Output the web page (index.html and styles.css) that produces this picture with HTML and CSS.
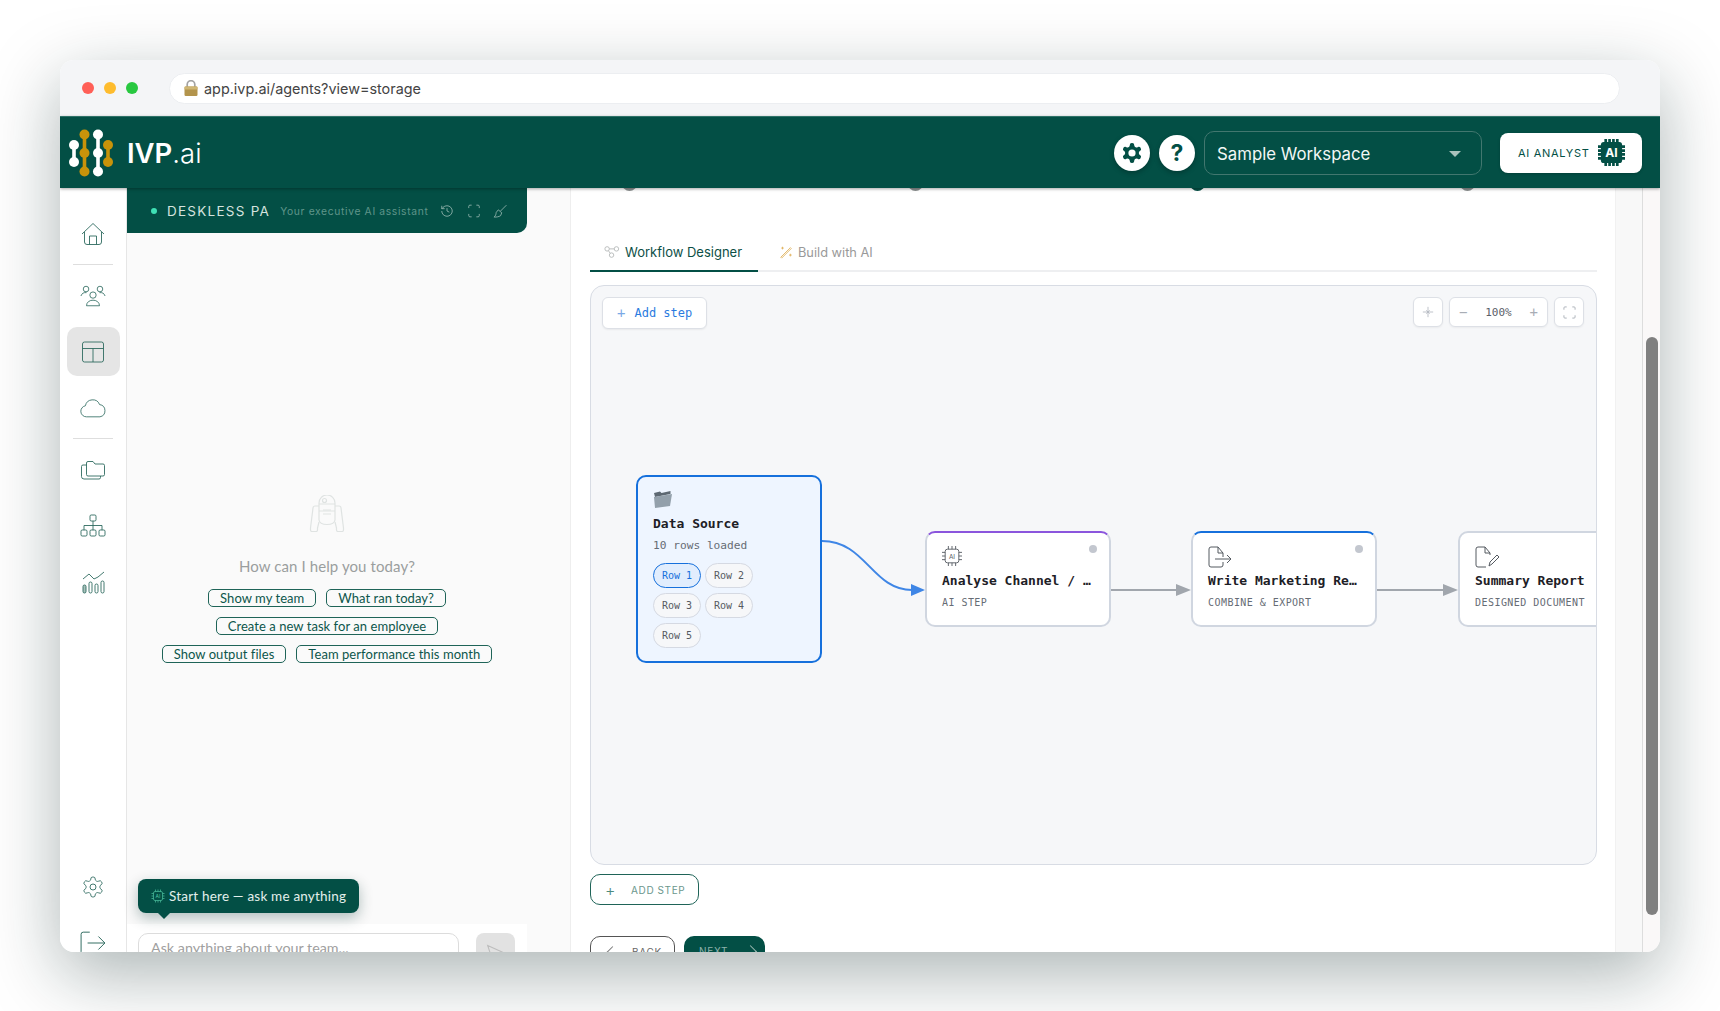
FILE: index.html
```html
<!DOCTYPE html>
<html lang="en">
<head>
    <meta charset="UTF-8">
    <title>IVP.ai Workflow Designer</title>
    <link rel="stylesheet" href="styles.css">
</head>
<body>
<div class="window">
    <!-- browser chrome -->
    <div class="titlebar">
        <div class="dots">
            <span class="dot red"></span>
            <span class="dot yellow"></span>
            <span class="dot green"></span>
        </div>
        <div class="urlbar">
            <svg class="lock" viewBox="0 0 14 16">
                <path d="M3.2 7V4.5a3.8 3.8 0 0 1 7.6 0V7" fill="none" stroke="#a3a3a3" stroke-width="1.7"/>
                <rect x="0.5" y="6.5" width="13" height="9.5" rx="1.2" fill="#b3944c"/>
                <rect x="0.5" y="6.5" width="13" height="3" rx="1" fill="#cfb673"/>
            </svg>
            <span>app.ivp.ai/agents?view=storage</span>
        </div>
    </div>

    <!-- app header -->
    <header class="appbar">
        <div class="brand">
            <svg class="logo" viewBox="0 0 46 48">
                <g fill="none" stroke-width="3.6">
                    <path d="M6 16V33M30 5.500V42.500" stroke="#fff"/>
                    <path d="M16.500 5.500V42.500M40 16V33" stroke="#c8930a"/>
                </g>
                <g fill="#fff">
                    <circle cx="6" cy="16" r="5"/><circle cx="6" cy="33" r="5"/>
                    <circle cx="30" cy="5.500" r="5"/><circle cx="30" cy="24" r="5"/><circle cx="30" cy="42.500" r="5"/>
                </g>
                <g fill="#c8930a">
                    <circle cx="16.500" cy="5.500" r="5"/><circle cx="16.500" cy="24" r="5"/><circle cx="16.500" cy="42.500" r="5"/>
                    <circle cx="40" cy="16" r="5"/><circle cx="40" cy="33" r="5"/>
                </g>
            </svg>
            <span class="brand-name"><b>IVP</b>.ai</span>
        </div>
        <div class="appbar-right">
            <button class="round-btn">
                <svg viewBox="0 0 24 24" width="24" height="24">
                    <path fill="#034f45" d="M12.22 2h-.44a2 2 0 0 0-2 2v.18a2 2 0 0 1-1 1.73l-.43.25a2 2 0 0 1-2 0l-.15-.08a2 2 0 0 0-2.73.73l-.22.38a2 2 0 0 0 .73 2.73l.15.1a2 2 0 0 1 1 1.72v.51a2 2 0 0 1-1 1.74l-.15.09a2 2 0 0 0-.73 2.73l.22.38a2 2 0 0 0 2.73.73l.15-.08a2 2 0 0 1 2 0l.43.25a2 2 0 0 1 1 1.73V20a2 2 0 0 0 2 2h.44a2 2 0 0 0 2-2v-.18a2 2 0 0 1 1-1.73l.43-.25a2 2 0 0 1 2 0l.15.08a2 2 0 0 0 2.73-.73l.22-.39a2 2 0 0 0-.73-2.73l-.15-.08a2 2 0 0 1-1-1.74v-.5a2 2 0 0 1 1-1.74l.15-.09a2 2 0 0 0 .73-2.73l-.22-.38a2 2 0 0 0-2.73-.73l-.15.08a2 2 0 0 1-2 0l-.43-.25a2 2 0 0 1-1-1.73V4a2 2 0 0 0-2-2z"/>
                    <circle cx="12" cy="12" r="3.600" fill="#fff"/>
                </svg>
            </button>
            <button class="round-btn help">?</button>
            <div class="workspace">
                <span>Sample Workspace</span>
                <span class="caret"></span>
            </div>
            <button class="analyst">
                <span>AI ANALYST</span>
                <svg class="chip-solid" viewBox="0 0 28 28">
                    <rect x="3" y="3" width="22" height="22" rx="3" fill="#034f45"/>
                    <path d="M8 0v4M12 0v4M16 0v4M20 0v4M8 24v4M12 24v4M16 24v4M20 24v4M0 8h4M0 12h4M0 16h4M0 20h4M24 8h4M24 12h4M24 16h4M24 20h4" stroke="#034f45" stroke-width="2.800"/>
                    <text x="14" y="19" text-anchor="middle" class="chip-label">AI</text>
                </svg>
            </button>
        </div>
    </header>

    <div class="workarea">
        <!-- icon rail -->
        <nav class="rail">
            <a class="rail-item">
                <svg viewBox="0 0 24 24"><path d="M1 12 12 1.500 23 12M3.500 10v10a2.500 2.500 0 0 0 2.500 2.500h12a2.500 2.500 0 0 0 2.500-2.500V10M8.500 22.500V14h7v8.500"/></svg>
            </a>
            <div class="rail-line"></div>
            <a class="rail-item">
                <svg viewBox="0 0 28 24"><circle cx="14" cy="11" r="3.400"/><circle cx="6.500" cy="4.500" r="3"/><circle cx="21.500" cy="4.500" r="3"/><path d="M7 22.500c0-8 14-8 14 0zM1 12c1-3 3-4 6-3.600M27 12c-1-3-3-4-6-3.600"/></svg>
            </a>
            <a class="rail-item active">
                <svg viewBox="0 0 24 24"><rect x="1.500" y="2" width="21" height="20" rx="2"/><path d="M1.500 8.500h21M12 8.500V22"/></svg>
            </a>
            <a class="rail-item">
                <svg viewBox="0 0 28 24"><path d="M21.500 21.500H7a6 6 0 0 1-1.200-11.900 8 8 0 0 1 15.300-1.300 6.700 6.700 0 0 1 .4 13.200z"/></svg>
            </a>
            <div class="rail-line"></div>
            <a class="rail-item">
                <svg viewBox="0 0 26 24"><path d="M8 3.500h5l2 2.500h8a1.500 1.500 0 0 1 1.500 1.500v9a1.500 1.500 0 0 1-1.500 1.500H8a1.500 1.500 0 0 1-1.500-1.500V5A1.500 1.500 0 0 1 8 3.500z"/><path d="M6.500 7H3a1.500 1.500 0 0 0-1.500 1.500v10A2.500 2.500 0 0 0 4 21h15a1.500 1.500 0 0 0 1.500-1.500V18"/></svg>
            </a>
            <a class="rail-item">
                <svg viewBox="0 0 26 24"><rect x="10" y="1" width="6" height="6" rx="1.200"/><rect x="1" y="16" width="6" height="6" rx="1.200"/><rect x="10" y="16" width="6" height="6" rx="1.200"/><rect x="19" y="16" width="6" height="6" rx="1.200"/><path d="M13 7v9M4 16v-4.500h18V16"/></svg>
            </a>
            <a class="rail-item">
                <svg viewBox="0 0 26 24"><path d="M3 9 9 4l5 5 4-2 6-5"/><rect x="3" y="15" width="3" height="8" rx="1.500" fill="#a9c2bc"/><rect x="9" y="12" width="3" height="11" rx="1.500"/><rect x="15" y="14" width="3" height="9" rx="1.500"/><rect x="21" y="11" width="3" height="12" rx="1.500"/></svg>
            </a>
            <div class="rail-bottom">
                <a class="rail-item">
                    <svg viewBox="0 0 24 24"><path d="M12.22 2h-.44a2 2 0 0 0-2 2v.18a2 2 0 0 1-1 1.73l-.43.25a2 2 0 0 1-2 0l-.15-.08a2 2 0 0 0-2.73.73l-.22.38a2 2 0 0 0 .73 2.73l.15.1a2 2 0 0 1 1 1.72v.51a2 2 0 0 1-1 1.74l-.15.09a2 2 0 0 0-.73 2.73l.22.38a2 2 0 0 0 2.73.73l.15-.08a2 2 0 0 1 2 0l.43.25a2 2 0 0 1 1 1.73V20a2 2 0 0 0 2 2h.44a2 2 0 0 0 2-2v-.18a2 2 0 0 1 1-1.73l.43-.25a2 2 0 0 1 2 0l.15.08a2 2 0 0 0 2.73-.73l.22-.39a2 2 0 0 0-.73-2.73l-.15-.08a2 2 0 0 1-1-1.74v-.5a2 2 0 0 1 1-1.74l.15-.09a2 2 0 0 0 .73-2.73l-.22-.38a2 2 0 0 0-2.73-.73l-.15.08a2 2 0 0 1-2 0l-.43-.25a2 2 0 0 1-1-1.73V4a2 2 0 0 0-2-2z"/><circle cx="12" cy="12" r="3"/></svg>
                </a>
                <a class="rail-item">
                    <svg viewBox="0 0 24 22"><path d="M9 1H3a2 2 0 0 0-2 2v16a2 2 0 0 0 2 2h6M7 11h16M17 5l6 6-6 6"/></svg>
                </a>
            </div>
        </nav>

        <!-- assistant panel -->
        <section class="chat-col">
            <div class="chat">
                <div class="chat-head">
                    <span class="status"></span>
                    <span class="chat-title">DESKLESS PA</span>
                    <span class="chat-sub">Your executive AI assistant</span>
                    <svg class="head-icon" viewBox="0 0 24 24"><path d="M3 12a9 9 0 1 0 9-9 9.750 9.750 0 0 0-6.740 2.740L3 8M3 3v5h5M12 7v5l4 2"/></svg>
                    <svg class="head-icon" viewBox="0 0 24 24"><path d="M8 2H5a2 2 0 0 0-2 2v3M21 7V4a2 2 0 0 0-2-2h-3M3 17v3a2 2 0 0 0 2 2h3M16 22h3a2 2 0 0 0 2-2v-3"/></svg>
                    <svg class="head-icon" viewBox="0 0 24 24"><path d="M23 2 13 12M9 10l6 5-2 5c-3 2-7 2.500-11 2.500 3-3 3-5 3.500-8z"/></svg>
                </div>
                <div class="empty">
                    <svg class="robot" viewBox="0 0 36 37">
                        <path d="M10 16V8a8 8 0 0 1 16 0v8M10 9h16M10 25c1 6 15 6 16 0V16H10z"/>
                        <circle cx="15.500" cy="5.500" r="2"/><path d="M14 15h8M14 19h8"/>
                        <path d="M10 11H6a2 2 0 0 0-2 2l-2.500 20v2a1.500 1.500 0 0 0 1.500 1.500h4a1.500 1.500 0 0 0 1.500-1.500V33L10 27M26 11h4a2 2 0 0 1 2 2l2.500 20v2a1.500 1.500 0 0 1-1.500 1.500h-4a1.500 1.500 0 0 1-1.500-1.500V33L26 27"/>
                    </svg>
                    <div class="help-text">How can I help you today?</div>
                    <div class="prompts">
                        <button class="prompt">Show my team</button>
                        <button class="prompt">What ran today?</button>
                    </div>
                    <div class="prompts">
                        <button class="prompt">Create a new task for an employee</button>
                    </div>
                    <div class="prompts">
                        <button class="prompt">Show output files</button>
                        <button class="prompt">Team performance this month</button>
                    </div>
                </div>
                <div class="tip">
                    <svg viewBox="0 0 28 28" width="14" height="14">
                        <rect x="5" y="5" width="18" height="18" rx="3" fill="none" stroke="#4fc3a1" stroke-width="1.400"/>
                        <path d="M9 1v4M14 1v4M19 1v4M9 23v4M14 23v4M19 23v4M1 9h4M1 14h4M1 19h4M23 9h4M23 14h4M23 19h4" stroke="#4fc3a1" stroke-width="1.400"/>
                        <text x="14" y="18" text-anchor="middle" class="tip-chip">AI</text>
                    </svg>
                    <span>Start here — ask me anything</span>
                </div>
                <div class="composer">
                    <div class="composer-input">Ask anything about your team...</div>
                    <div class="send">
                        <svg viewBox="0 0 24 24" width="20" height="20"><path d="M2 3 22 12 2 21l3-9z" fill="none" stroke="#bdbdbd" stroke-width="1.300"/></svg>
                    </div>
                </div>
            </div>
        </section>

        <!-- workflow page -->
        <main class="main">
            <div class="stepper">
                <span class="step"></span>
                <span class="step"></span>
                <span class="step current"></span>
                <span class="step"></span>
            </div>
            <div class="tabs">
                <a class="tab active">
                    <svg viewBox="0 0 18 14"><circle cx="3.500" cy="3.500" r="2.500"/><circle cx="14" cy="3.500" r="2.500"/><circle cx="8.500" cy="10.500" r="2.500"/><path d="M6 3.500h5.500M5 5.500l2 3"/></svg>
                    Workflow Designer
                </a>
                <a class="tab">
                    <svg class="wand" viewBox="0 0 16 16"><path d="M2 14 13 3l1 1L3 15zM4 2v3M2.500 3.500h3M13 10v3M11.500 11.500h3"/></svg>
                    Build with AI
                </a>
            </div>

            <div class="canvas">
                <button class="add-node"><span class="add-plus">+</span>Add step</button>

                <div class="canvas-tools">
                    <button class="tool">
                        <svg viewBox="0 0 14 14" width="12" height="12"><path d="M7 1v12M1 7h12M5 5l4 4M9 5 5 9" stroke="#b4b9c1" fill="none"/></svg>
                    </button>
                    <div class="tool zoom-group">
                        <span class="zoom-sign">−</span>
                        <span class="zoom-val">100%</span>
                        <span class="zoom-sign">+</span>
                    </div>
                    <button class="tool">
                        <svg viewBox="0 0 14 14" width="13" height="13"><path d="M4 1H2a1 1 0 0 0-1 1v2M10 1h2a1 1 0 0 1 1 1v2M1 10v2a1 1 0 0 0 1 1h2M13 10v2a1 1 0 0 1-1 1h-2" stroke="#a8adb5" fill="none"/></svg>
                    </button>
                </div>

                <svg class="edges" width="1006" height="578">
                    <path d="M231 255C275 255 281 304 321 304" fill="none" stroke="#3f86e6" stroke-width="2"/>
                    <path d="M334 304 320 298v12z" fill="#3f86e6"/>
                    <path d="M520 304H587M786 304H853" fill="none" stroke="#a1a6ad" stroke-width="2"/>
                    <path d="M600 304 585 298v12zM867 304 852 298v12z" fill="#a1a6ad"/>
                </svg>

                <div class="node source">
                    <svg class="node-icon" viewBox="0 0 20 20">
                        <path d="M1 4l6-1.500 1.500 1.500 9-2v3L2 8z" fill="#5d6872"/>
                        <path d="M1 8l18-3-2 12-15 2z" fill="#93a0ab"/>
                    </svg>
                    <div class="node-title">Data Source</div>
                    <div class="node-meta">10 rows loaded</div>
                    <div class="rows">
                        <span class="row on">Row 1</span>
                        <span class="row">Row 2</span>
                        <span class="row">Row 3</span>
                        <span class="row">Row 4</span>
                        <span class="row">Row 5</span>
                    </div>
                </div>

                <div class="node step-node node-ai">
                    <span class="node-state"></span>
                    <svg class="node-icon line" viewBox="0 0 22 22">
                        <rect x="3.500" y="3.500" width="15" height="15" rx="2.500"/>
                        <path d="M7 0v3.500M11 0v3.500M15 0v3.500M7 18.500V22M11 18.500V22M15 18.500V22M0 7h3.500M0 11h3.500M0 15h3.500M18.500 7H22M18.500 11H22M18.500 15H22"/>
                        <text x="11" y="14" text-anchor="middle" class="node-chip">AI</text>
                    </svg>
                    <div class="node-title">Analyse Channel / …</div>
                    <div class="node-type">AI STEP</div>
                </div>

                <div class="node step-node node-export">
                    <span class="node-state"></span>
                    <svg class="node-icon line wide" viewBox="0 0 24 22">
                        <path d="M15 11V7l-5-6H3a2 2 0 0 0-2 2v16a2 2 0 0 0 2 2h10a2 2 0 0 0 2-2v-3M10 1v6h5M7 13h15M19 9l4 4-4 4"/>
                    </svg>
                    <div class="node-title">Write Marketing Re…</div>
                    <div class="node-type">COMBINE &amp; EXPORT</div>
                </div>

                <div class="node step-node node-doc">
                    <svg class="node-icon line wide" viewBox="0 0 24 22">
                        <path d="M15 9V7l-5-6H3a2 2 0 0 0-2 2v16a2 2 0 0 0 2 2h8M10 1v6h5M14 20l1-4 7-7 2 2-7 7z"/>
                    </svg>
                    <div class="node-title">Summary Report</div>
                    <div class="node-type">DESIGNED DOCUMENT</div>
                </div>
            </div>

            <button class="add-step"><span class="add-step-plus">+</span>ADD STEP</button>

            <div class="wizard">
                <button class="back"><span class="back-arrow"></span>BACK</button>
                <button class="next">NEXT<span class="next-arrow"></span></button>
            </div>
        </main>

        <div class="gutter"></div>
        <div class="scroll-track"><div class="scroll-thumb"></div></div>
    </div>
</div>
</body>
</html>
```

FILE: styles.css
```css
* {
    box-sizing: border-box;
}
html, body {
    margin: 0;
    height: 100%;
    overflow: hidden;
}
body {
    background: #fff;
    padding: 60px 60px 0;
    font-family: Inter, "Liberation Sans", sans-serif;
    color: #222;
}
button {
    font-family: inherit;
    cursor: pointer;
}
.window {
    height: 892px;
    display: flex;
    flex-direction: column;
    overflow: hidden;
    border-radius: 14px;
    background: #fff;
    box-shadow: 0 22px 70px rgba(10, 35, 35, 0.34);
}

/* browser chrome */
.titlebar {
    height: 56px;
    flex: none;
    display: flex;
    align-items: center;
    background: #f4f5f7;
    padding: 0 40px 0 22px;
}
.dots {
    display: flex;
    gap: 10px;
    margin-right: 31px;
}
.dot {
    width: 12px;
    height: 12px;
    border-radius: 50%;
}
.red { background: #ff5f57; }
.yellow { background: #febc2e; }
.green { background: #28c840; }
.urlbar {
    flex: 1;
    height: 31px;
    display: flex;
    align-items: center;
    gap: 6px;
    padding-left: 14px;
    background: #fff;
    border: 1px solid #eceef1;
    border-radius: 16px;
    font-size: 14.4px;
    color: #444;
}
.lock {
    width: 14px;
    height: 16px;
}

/* header */
.appbar {
    height: 72px;
    flex: none;
    display: flex;
    align-items: center;
    justify-content: space-between;
    padding: 0 18px 0 8px;
    background: #034f45;
    border-top: 1px solid #2f7268;
    box-shadow: 0 1px 3px rgba(0, 0, 0, 0.35);
    position: relative;
    z-index: 3;
}
.brand {
    display: flex;
    align-items: center;
    gap: 13px;
}
.logo {
    width: 46px;
    height: 48px;
}
.brand-name {
    font-size: 27.5px;
    font-weight: 300;
    color: #fff;
}
.brand-name b {
    font-weight: 600;
}
.appbar-right {
    display: flex;
    align-items: center;
}
.round-btn {
    width: 36px;
    height: 36px;
    margin-right: 9px;
    border: 0;
    border-radius: 50%;
    background: #fff;
    display: flex;
    align-items: center;
    justify-content: center;
    padding: 0;
    box-shadow: 0 2px 5px rgba(0, 0, 0, 0.25);
}
.help {
    font-size: 23px;
    font-weight: 700;
    color: #034f45;
}
.workspace {
    width: 278px;
    height: 44px;
    margin: 0 18px 0 0;
    display: flex;
    align-items: center;
    justify-content: space-between;
    padding: 2px 20px 0 12px;
    border: 1px solid #42776f;
    border-radius: 10px;
    font-size: 16.8px;
    color: #f2f7f6;
}
.caret {
    width: 0;
    height: 0;
    border-left: 6px solid transparent;
    border-right: 6px solid transparent;
    border-top: 6px solid #a9c2bc;
}
.analyst {
    width: 142px;
    height: 40px;
    border: 0;
    border-radius: 8px;
    background: #fff;
    display: flex;
    align-items: center;
    gap: 8px;
    padding: 0 0 0 18px;
    font-size: 11px;
    letter-spacing: 0.7px;
    color: #034f45;
    box-shadow: 0 1px 3px rgba(0, 0, 0, 0.2);
}
.chip-solid {
    width: 27px;
    height: 27px;
}
.chip-label {
    font-family: Inter, sans-serif;
    font-size: 12.5px;
    font-weight: 700;
    fill: #fff;
    letter-spacing: 0;
}

/* body of app */
.workarea {
    flex: 1;
    min-height: 0;
    display: flex;
}

/* icon rail */
.rail {
    width: 67px;
    flex: none;
    display: flex;
    flex-direction: column;
    align-items: center;
    padding-top: 21px;
    border-right: 1px solid #e6e6e6;
    background: #fff;
}
.rail-item {
    width: 53px;
    height: 49px;
    flex: none;
    margin-bottom: 7px;
    display: flex;
    align-items: center;
    justify-content: center;
    border-radius: 10px;
}
.rail-item svg {
    width: 26px;
    height: 24px;
    fill: none;
    stroke: #2f6b60;
    stroke-width: 0.9;
}
.rail-item.active {
    background: #e5e5e5;
}
.rail-line {
    width: 40px;
    height: 1px;
    margin: -1px 0 6px;
    background: #dedede;
}
.rail-bottom {
    margin-top: auto;
    margin-bottom: -22px;
}

/* chat column */
.chat-col {
    width: 444px;
    flex: none;
    background: #fafafa;
    border-right: 1px solid #eeeeee;
}
.chat {
    width: 400px;
    height: 100%;
    display: flex;
    flex-direction: column;
    position: relative;
}
.chat-head {
    height: 45px;
    flex: none;
    display: flex;
    align-items: center;
    padding: 0 19px 0 24px;
    background: #034f45;
    border-radius: 0 0 10px 0;
}
.status {
    width: 6px;
    height: 6px;
    flex: none;
    border-radius: 50%;
    background: #3fe0b5;
    margin-right: 10px;
}
.chat-title {
    font-size: 13.5px;
    letter-spacing: 1.25px;
    color: #d5e3df;
    margin-right: 10px;
    white-space: nowrap;
}
.chat-sub {
    font-size: 10.3px;
    letter-spacing: 0.65px;
    color: #5f958a;
    margin-right: 12px;
    white-space: nowrap;
}
.head-icon {
    width: 14px;
    height: 14px;
    margin-right: 12.5px;
    flex: none;
    fill: none;
    stroke: #a7c2bc;
    stroke-width: 1.3;
}
.empty {
    flex: 1;
    display: flex;
    flex-direction: column;
    align-items: center;
    padding-top: 262px;
}
.robot {
    width: 36px;
    height: 37px;
    fill: none;
    stroke: #dfe3e2;
    stroke-width: 1.2;
}
.help-text {
    font-family: Lato, sans-serif;
    font-size: 15px;
    color: #9a9e9e;
    margin: 25px 0 14px;
    letter-spacing: 0.1px;
}
.prompts {
    display: flex;
    gap: 10px;
    margin-bottom: 10px;
}
.prompt {
    height: 18px;
    padding: 0 11px;
    background: transparent;
    border: 1.3px solid #1f6458;
    border-radius: 5px;
    font-family: Lato, sans-serif;
    font-size: 13px;
    line-height: 15px;
    letter-spacing: 0.05px;
    color: #0d564b;
    white-space: nowrap;
}
.tip {
    position: absolute;
    left: 11px;
    bottom: 39px;
    width: 221px;
    height: 34px;
    display: flex;
    align-items: center;
    gap: 4px;
    padding-left: 13px;
    background: #034f45;
    border-radius: 8px;
    font-family: Lato, sans-serif;
    font-size: 13.5px;
    letter-spacing: 0.2px;
    color: #e3efec;
    box-shadow: 0 5px 14px rgba(0, 50, 45, 0.3);
}
.tip::after {
    content: "";
    position: absolute;
    left: 20px;
    top: 34px;
    border-left: 6px solid transparent;
    border-right: 6px solid transparent;
    border-top: 6px solid #034f45;
}
.tip-chip {
    font-family: Inter, sans-serif;
    font-size: 10px;
    fill: #4fc3a1;
}
.composer {
    height: 28px;
    flex: none;
    display: flex;
    gap: 17px;
    padding: 9px 12px 0 11px;
    background: #fff;
    overflow: hidden;
}
.composer-input {
    width: 321px;
    height: 42px;
    flex: none;
    padding: 5px 12px;
    border: 1px solid #dcdcdc;
    border-radius: 10px;
    background: #fff;
    font-family: Lato, sans-serif;
    font-size: 14.3px;
    color: #a0a0a0;
}
.send {
    width: 39px;
    height: 40px;
    flex: none;
    display: flex;
    align-items: center;
    justify-content: center;
    background: #e2e2e2;
    border-radius: 8px;
}

/* main page */
.main {
    width: 1044px;
    flex: none;
    padding: 0 18px 0 19px;
    background: #fff;
    overflow: hidden;
}
.stepper {
    height: 3px;
    display: flex;
    padding-left: 32px;
}
.step {
    width: 15px;
    height: 15px;
    margin-top: -12px;
    margin-right: 271px;
    flex: none;
    border-radius: 50%;
    background: #8b8f8f;
}
.step:nth-child(2) {
    margin-right: 267px;
}
.step.current {
    background: #034f45;
    margin-right: 255px;
}
.tabs {
    height: 36px;
    margin-top: 45px;
    display: flex;
    border-bottom: 2px solid #eeeff1;
}
.tab {
    height: 36px;
    display: flex;
    align-items: center;
    gap: 5px;
    padding: 0 14px 4px;
    font-size: 13px;
    color: #999;
    white-space: nowrap;
}
.tab + .tab {
    margin-left: 6px;
    gap: 4px;
    font-size: 12.8px;
}
.tab svg {
    width: 16px;
    height: 14px;
    fill: none;
    stroke: #b4b8b8;
}
.tab svg.wand {
    stroke: #e0b25e;
}
.tab.active {
    color: #0d4f46;
    width: 168px;
    padding-bottom: 2px;
    border-bottom: 2px solid #034f45;
}
.canvas {
    height: 580px;
    margin-top: 13px;
    position: relative;
    overflow: hidden;
    background: #f6f7f9;
    border: 1px solid #d8dce4;
    border-radius: 14px;
    font-family: "DejaVu Sans Mono", "Liberation Mono", monospace;
}
.add-node {
    position: absolute;
    left: 11px;
    top: 11px;
    width: 105px;
    height: 32px;
    display: flex;
    align-items: center;
    gap: 9px;
    padding: 0 0 0 14px;
    background: #fff;
    border: 1px solid #dde0e6;
    border-radius: 6px;
    font-family: inherit;
    font-size: 12px;
    color: #2b7be0;
    box-shadow: 0 1px 2px rgba(0, 0, 0, 0.06);
}
.add-plus {
    font-size: 14px;
    font-weight: 300;
    color: #7aa9e6;
}
.canvas-tools {
    position: absolute;
    right: 12px;
    top: 11px;
    display: flex;
    gap: 6px;
}
.tool {
    width: 30px;
    height: 30px;
    display: flex;
    align-items: center;
    justify-content: center;
    padding: 0;
    background: #fff;
    border: 1px solid #dde0e6;
    border-radius: 6px;
    box-shadow: 0 1px 2px rgba(0, 0, 0, 0.05);
}
.zoom-group {
    width: 99px;
    justify-content: space-between;
    padding: 0 9px;
    font-size: 11px;
    color: #5a6068;
}
.zoom-sign {
    font-size: 14px;
    color: #a8adb5;
}
.edges {
    position: absolute;
    left: 0;
    top: 0;
}
.node {
    position: absolute;
    width: 186px;
    background: #fff;
    border: 2px solid #d0d6e0;
    border-radius: 10px;
}
.source {
    left: 45px;
    top: 189px;
    height: 188px;
    padding: 12px 15px;
    background: #eef5ff;
    border-color: #1670dc;
}
.step-node {
    top: 245px;
    height: 96px;
    padding: 13px 15px;
}
.node-ai {
    left: 334px;
    border-top-color: #8b55dd;
}
.node-export {
    left: 600px;
    border-top-color: #1670dc;
}
.node-doc {
    left: 867px;
}
.node-state {
    position: absolute;
    right: 12px;
    top: 12px;
    width: 8px;
    height: 8px;
    border-radius: 50%;
    background: #c3c7cf;
}
.node-icon {
    display: block;
    width: 20px;
    height: 20px;
}
.node-icon.line {
    fill: none;
    stroke: #555a61;
    stroke-width: 1;
}
.node-icon.wide {
    width: 24px;
    height: 22px;
    margin-bottom: -2px;
}
.node-chip {
    font-family: Inter, sans-serif;
    font-size: 7px;
    stroke: none;
    fill: #555a61;
}
.node-title {
    margin-top: 6px;
    font-size: 13px;
    line-height: 18px;
    font-weight: 700;
    color: #1d2026;
    white-space: nowrap;
}
.node-meta {
    margin-top: 4px;
    font-size: 11.2px;
    line-height: 18px;
    color: #666c75;
}
.node-type {
    margin-top: 4px;
    font-size: 10px;
    line-height: 18px;
    letter-spacing: 0.45px;
    color: #666c75;
    white-space: nowrap;
}
.rows {
    width: 110px;
    margin-top: 8px;
    display: flex;
    flex-wrap: wrap;
    gap: 5px 4px;
}
.row {
    width: 48px;
    height: 25px;
    display: flex;
    align-items: center;
    justify-content: center;
    background: #f6f7f9;
    border: 1px solid #d5d9e2;
    border-radius: 13px;
    font-size: 10px;
    color: #555a61;
}
.row.on {
    background: #e1edfd;
    border-color: #1670dc;
    color: #1670dc;
}
.add-step {
    width: 109px;
    height: 31px;
    margin-top: 9px;
    display: flex;
    align-items: center;
    gap: 15px;
    padding: 0 0 0 14px;
    background: #fff;
    border: 1.3px solid #1f6458;
    border-radius: 10px;
    font-size: 10px;
    letter-spacing: 0.6px;
    color: #6b978d;
}
.add-step-plus {
    font-size: 16px;
    font-weight: 300;
    color: #4d8a7d;
}
.wizard {
    margin-top: 31px;
    display: flex;
    gap: 9px;
}
.back, .next {
    height: 40px;
    border-radius: 10px;
    display: flex;
    padding: 9px 0 0;
    font-size: 10px;
    letter-spacing: 0.7px;
}
.back {
    width: 85px;
    background: #fff;
    border: 1.3px solid #555;
    color: #666;
    padding-left: 17px;
    gap: 15px;
}
.next {
    width: 81px;
    background: #034f45;
    border: 0;
    color: #8fb3ab;
    padding-left: 15px;
    gap: 18px;
}
.back-arrow, .next-arrow {
    width: 9px;
    height: 9px;
    margin-top: 2px;
    transform: rotate(45deg);
}
.back-arrow {
    border-left: 1px solid #777;
    border-bottom: 1px solid #777;
}
.next-arrow {
    border-right: 1px solid #9fbdb6;
    border-top: 1px solid #9fbdb6;
}

/* right of page */
.gutter {
    width: 28px;
    flex: none;
    background: #f8f8f8;
    border-left: 1px solid #f1f1f1;
    border-right: 1px solid #dddddd;
}
.scroll-track {
    flex: 1;
    background: #faf8f8;
    padding: 149px 2px 0 3px;
}
.scroll-thumb {
    height: 578px;
    border-radius: 6px;
    background: #808080;
}
```
